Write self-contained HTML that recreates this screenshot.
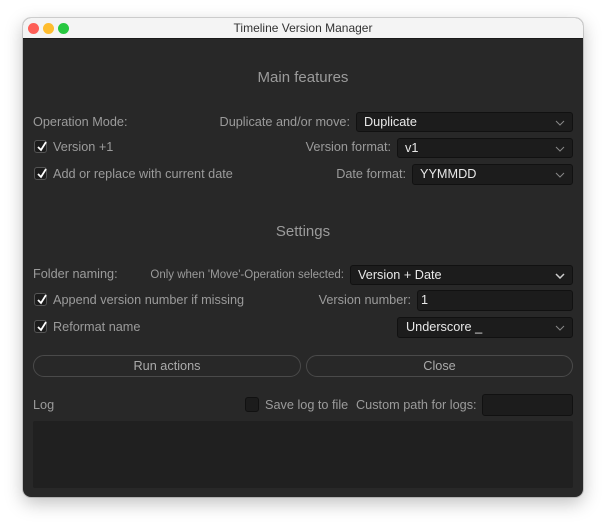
<!DOCTYPE html>
<html><head><style>
body{margin:0;width:606px;height:525px;background:#fff;position:relative;font-family:"Liberation Sans",sans-serif;overflow:hidden}
.win{position:absolute;left:23px;top:18px;width:560px;height:479px;border-radius:8px;background:#282828;box-shadow:0 6px 18px rgba(0,0,0,.25),0 0 0 1px rgba(0,0,0,.15);overflow:hidden}
.tb{position:absolute;left:0;top:0;width:560px;height:20px;background:#f4f4f4;border-bottom:1px solid #1a1a1a;text-align:center;font-size:12px;line-height:21px;color:#333}
.dot{position:absolute;top:5px;width:11px;height:11px;border-radius:50%}
.a{position:absolute;font-size:12.7px;color:#9b9b9b;white-space:nowrap;line-height:15px}
.h{position:absolute;font-size:15px;color:#9b9b9b;width:560px;text-align:center;left:0}
.cb{position:absolute;background:#1c1c1c;border:1px solid #111;border-radius:3px;color:#e8e8e8;font-size:12.7px;line-height:19px;padding-left:7px;box-sizing:border-box}
.cb svg{position:absolute;right:7px;top:7px}
.chk{position:absolute;width:13px;height:13px;background:#1c1c1c;border:1px solid #555;border-radius:3px;box-sizing:border-box}
.chk svg{position:absolute;left:1px;top:0}
.btn{position:absolute;top:337px;height:22px;border:1px solid #4a4a4a;border-radius:11px;box-sizing:border-box;text-align:center;color:#aaa;font-size:12.7px;line-height:20px}
</style></head><body>
<div class="win">
<div class="tb">Timeline Version Manager
<div class="dot" style="left:5px;background:#fe5f57"></div>
<div class="dot" style="left:20px;background:#febc2e"></div>
<div class="dot" style="left:35px;background:#28c840"></div></div>
<div class="h" style="top:51px">Main features</div>
<div class="a" style="left:10px;top:97px">Operation Mode:</div>
<div class="a" style="right:233px;top:97px">Duplicate and/or move:</div>
<div class="cb" style="left:333px;top:94px;width:217px;height:20px">Duplicate<svg width="10" height="6"><path d="M1 1l4 4 4-4" stroke="#888" fill="none"/></svg></div>
<div class="chk" style="left:11px;top:122px"><svg width="11" height="11"><path d="M2 6l3 3 5-8" stroke="#fff" stroke-width="1.8" fill="none"/></svg></div>
<div class="a" style="left:30px;top:122px">Version +1</div>
<div class="a" style="right:192px;top:122px">Version format:</div>
<div class="cb" style="left:374px;top:120px;width:176px;height:20px">v1<svg width="10" height="6"><path d="M1 1l4 4 4-4" stroke="#888" fill="none"/></svg></div>
<div class="chk" style="left:11px;top:149px"><svg width="11" height="11"><path d="M2 6l3 3 5-8" stroke="#fff" stroke-width="1.8" fill="none"/></svg></div>
<div class="a" style="left:30px;top:149px">Add or replace with current date</div>
<div class="a" style="right:177px;top:149px">Date format:</div>
<div class="cb" style="left:389px;top:146px;width:161px;height:21px">YYMMDD<svg width="10" height="6"><path d="M1 1l4 4 4-4" stroke="#888" fill="none"/></svg></div>
<div class="h" style="top:205px">Settings</div>
<div class="a" style="left:10px;top:249px">Folder naming:</div>
<div class="a" style="right:239px;top:250px;font-size:11.5px">Only when 'Move'-Operation selected:</div>
<div class="cb" style="left:327px;top:247px;width:223px;height:20px">Version + Date<svg width="10" height="6"><path d="M1 1l4 4 4-4" stroke="#ccc" stroke-width="1.5" fill="none"/></svg></div>
<div class="chk" style="left:11px;top:275px"><svg width="11" height="11"><path d="M2 6l3 3 5-8" stroke="#fff" stroke-width="1.8" fill="none"/></svg></div>
<div class="a" style="left:30px;top:275px">Append version number if missing</div>
<div class="a" style="right:172px;top:275px">Version number:</div>
<div class="cb" style="left:394px;top:272px;width:156px;height:21px;padding-left:3px">1</div>
<div class="chk" style="left:11px;top:302px"><svg width="11" height="11"><path d="M2 6l3 3 5-8" stroke="#fff" stroke-width="1.8" fill="none"/></svg></div>
<div class="a" style="left:30px;top:302px">Reformat name</div>
<div class="cb" style="left:374px;top:299px;width:176px;height:21px;padding-left:8px">Underscore _<svg width="10" height="6"><path d="M1 1l4 4 4-4" stroke="#888" fill="none"/></svg></div>
<div class="btn" style="left:10px;width:268px">Run actions</div>
<div class="btn" style="left:283px;width:267px">Close</div>
<div class="a" style="left:10px;top:380px">Log</div>
<div class="chk" style="left:222px;top:379px;width:14px;height:15px;border-color:#111"></div>
<div class="a" style="left:242px;top:380px">Save log to file</div>
<div class="a" style="left:333px;top:380px">Custom path for logs:</div>
<div class="cb" style="left:459px;top:376px;width:91px;height:22px"></div>
<div style="position:absolute;left:10px;top:403px;width:540px;height:67px;background:#202020;border-radius:2px"></div>
</div>
</body></html>
